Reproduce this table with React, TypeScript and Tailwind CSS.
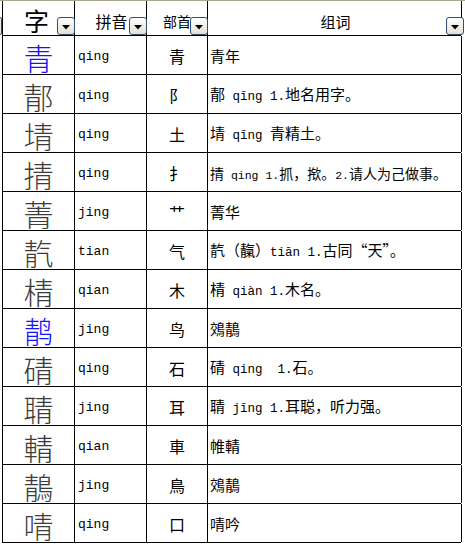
import React from "react";

type Row = { c: string; blue?: boolean; py: string; r: string; w: string; small?: boolean };

const rows: Row[] = [
  { c: "青", blue: true, py: "qing", r: "青", w: "青年" },
  { c: "郬", py: "qing", r: "阝", w: "郬 qīng 1.地名用字。" },
  { c: "埥", py: "qing", r: "土", w: "埥 qīng 青精土。" },
  { c: "掅", py: "qing", r: "扌", w: "掅 qing 1.抓，揿。2.请人为己做事。", small: true },
  { c: "菁", py: "jing", r: "艹", w: "菁华" },
  { c: "靔", py: "tian", r: "气", w: "靔（靝）tiān 1.古同“天”。" },
  { c: "棈", py: "qian", r: "木", w: "棈 qiàn 1.木名。" },
  { c: "䴖", blue: true, py: "jing", r: "鸟", w: "鵁鶄" },
  { c: "碃", py: "qing", r: "石", w: "碃 qing  1.石。" },
  { c: "聙", py: "jing", r: "耳", w: "聙 jīng 1.耳聪，听力强。" },
  { c: "輤", py: "qian", r: "車", w: "帷輤" },
  { c: "鶄", py: "jing", r: "鳥", w: "鵁鶄" },
  { c: "啨", py: "qing", r: "口", w: "啨吟" },
];

const CJK = "font-['Noto_Sans_CJK_SC',sans-serif]";

function Mixed({ text, small }: { text: string; small?: boolean }) {
  const parts = text.split(/([\u0000-\u024F]+)/).filter((p) => p.length > 0);
  const latin = small ? "text-[11.5px]" : "text-[12.5px]";
  const cjk = small ? "text-[14px]" : "text-[15px]";
  return (
    <span className="whitespace-pre leading-none">
      {parts.map((p, i) =>
        /^[\u0000-\u024F]+$/.test(p) ? (
          <span key={i} className={`font-['Liberation_Mono',monospace] ${latin}`}>
            {p}
          </span>
        ) : (
          <span key={i} className={`${CJK} ${cjk}`}>
            {p}
          </span>
        )
      )}
    </span>
  );
}

function DropBtn({ className }: { className: string }) {
  return (
    <div
      className={`absolute bottom-0 w-[18px] h-[18px] rounded-[3px] border border-[#2f4f74] bg-gradient-to-b from-white to-[#e4e0d2] flex items-center justify-center ${className}`}
    >
      <svg width="8" height="5" viewBox="0 0 8 5" className="mt-[2px]">
        <polygon points="0,0 8,0 4,4.5" fill="#000" />
      </svg>
    </div>
  );
}

export default function App() {
  return (
    <div className="w-[465px] h-[544px] bg-white relative overflow-hidden text-black">
      <div className="h-px bg-[#a8a791]" />
      <div className="absolute left-[-2px] top-[17px] w-[4px] h-[18px] rounded-[3px] border border-[#2f4f74] bg-[#eceadf]" />
      <div className="ml-[2px] w-[459px] border-l border-black">
        {/* header */}
        <div className="grid grid-cols-[72px_72px_61px_254px] h-[35px] border-b border-black">
          <div className="relative border-r border-black flex items-center justify-center pt-[4px] pr-[4px]">
            <span className={`${CJK} text-[25px] leading-none`}>字</span>
            <DropBtn className="right-[-1px]" />
          </div>
          <div className="relative border-r border-black flex items-center justify-center pt-[6px] pl-[2px]">
            <span className={`${CJK} text-[16px] leading-none`}>拼音</span>
            <DropBtn className="right-[-1px]" />
          </div>
          <div className="relative border-r border-black flex items-center justify-center pt-[6px]">
            <span className={`${CJK} text-[14px] leading-none`}>部首</span>
            <DropBtn className="right-[-1px]" />
          </div>
          <div className="relative border-r border-black flex items-center justify-center pt-[6px] pl-[2px]">
            <span className={`${CJK} text-[15px] leading-none`}>组词</span>
            <DropBtn className="right-[-3px]" />
          </div>
        </div>
        {rows.map((row, i) => (
          <div
            key={i}
            className="grid grid-cols-[72px_72px_61px_254px] h-[39px] border-b border-black"
          >
            <div className="border-r border-black flex items-center justify-center pt-[4px]">
              <span
                className={`${CJK} text-[30px] leading-[30px] font-light ${
                  row.blue ? "text-[#1414ff]" : "text-[#3c3c3c]"
                }`}
              >
                {row.c}
              </span>
            </div>
            <div className="border-r border-black flex items-center pl-[3px] pt-[2px]">
              <span className="font-['Liberation_Mono',monospace] text-[13px] leading-none">
                {row.py}
              </span>
            </div>
            <div className="border-r border-black flex items-center justify-center pt-[2px]">
              <span className={`${CJK} text-[16px] leading-none`}>{row.r}</span>
            </div>
            <div className="border-r border-black flex items-center pl-[2px] pt-[2px] overflow-hidden">
              <Mixed text={row.w} small={row.small} />
            </div>
          </div>
        ))}
      </div>
    </div>
  );
}
